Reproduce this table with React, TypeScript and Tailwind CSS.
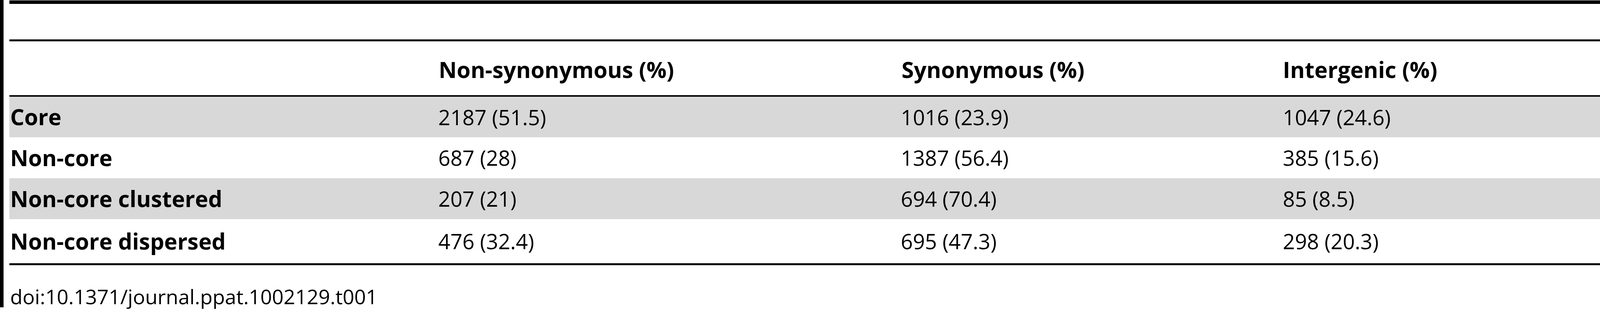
const rows = [
  { label: "Core", a: "2187 (51.5)", b: "1016 (23.9)", c: "1047 (24.6)", shaded: true, h: "h-[104px]" },
  { label: "Non-core", a: "687 (28)", b: "1387 (56.4)", c: "385 (15.6)", shaded: false, h: "h-[105px]" },
  { label: "Non-core clustered", a: "207 (21)", b: "694 (70.4)", c: "85 (8.5)", shaded: true, h: "h-[105px]" },
  { label: "Non-core dispersed", a: "476 (32.4)", b: "695 (47.3)", c: "298 (20.3)", shaded: false, h: "h-[113px]" },
];

const cols = "grid grid-cols-[1096px_1184px_979px_1fr]";

export default function App() {
  return (
    <div
      className="flex h-[800px] w-[4139px] bg-white text-black"
      style={{ fontFamily: '"Open Sans", "Liberation Sans", sans-serif' }}
    >
      <div className="h-[788px] w-[10px] border-r border-[#e4e4e4] bg-black" />
      <div className="ml-[14px] flex-1">
        <div className="mt-px h-[100px] border-t-[9px] border-black" />
        <div className="border-t-[5px] border-black" />
        <div className={`${cols} h-[138px] items-center pt-[8px] text-[57px] font-bold`}>
          <div />
          <div className="pl-[3px]">Non-synonymous (%)</div>
          <div className="pl-[4px]">Synonymous (%)</div>
          <div className="pl-[1px]">Intergenic (%)</div>
        </div>
        <div className="border-t-4 border-black" />
        {rows.map((r) => (
          <div
            key={r.label}
            className={`${cols} ${r.h} items-center text-[54px] ${r.shaded ? "bg-[#d8d8d8]" : ""}`}
          >
            <div className="pl-[2px] text-[57px] font-bold">{r.label}</div>
            <div className="pl-[2px]">{r.a}</div>
            <div className="pl-[2px]">{r.b}</div>
            <div className="pl-[1px]">{r.c}</div>
          </div>
        ))}
        <div className="border-t-[5px] border-black" />
        <div className="pl-[2px] pt-[50px] text-[52px] leading-[60px]">doi:10.1371/journal.ppat.1002129.t001</div>
      </div>
    </div>
  );
}
